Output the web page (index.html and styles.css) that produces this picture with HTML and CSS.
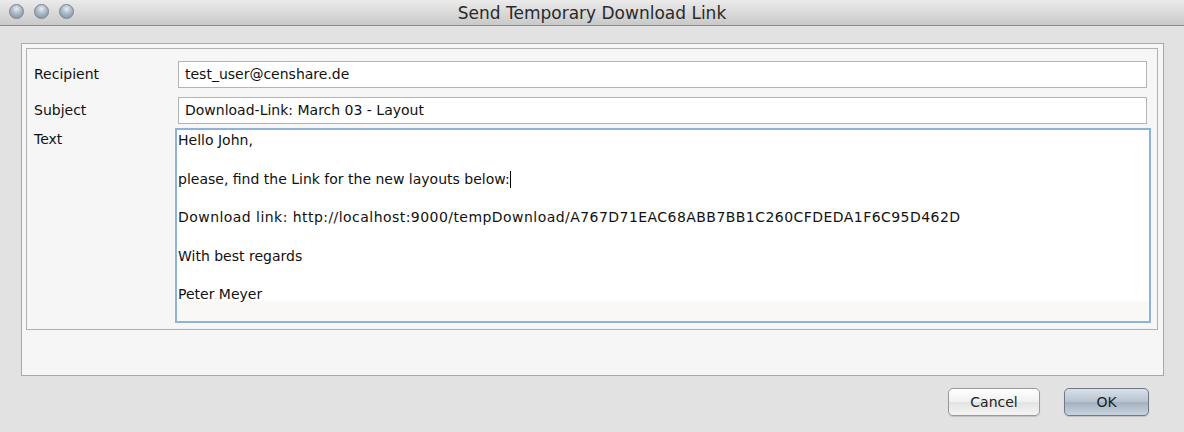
FILE: index.html
```html
<!DOCTYPE html>
<html lang="en">
<head>
  <meta charset="UTF-8" />
  <title>Send Temporary Download Link</title>
  <link rel="stylesheet" href="styles.css">
</head>
<body>
  <div class="titlebar">
    <div class="lights">
      <span class="light"></span>
      <span class="light"></span>
      <span class="light"></span>
    </div>
    <div class="title">Send Temporary Download Link</div>
  </div>

  <div class="dialog">
    <div class="outer">
      <div class="inner">
        <div class="label">Recipient</div>
        <div class="field">test_user@censhare.de</div>

        <div class="label">Subject</div>
        <div class="field">Download-Link: March 03 - Layout</div>

        <div class="label label-text">Text</div>
        <div class="textarea">
          <p>Hello John,</p>
          <p>please, find the Link for the new layouts below:<span class="caret"></span></p>
          <p class="link">Download link: http://localhost:9000/tempDownload/A767D71EAC68ABB7BB1C260CFDEDA1F6C95D462D</p>
          <p>With best regards</p>
          <p>Peter Meyer</p>
        </div>
      </div>
    </div>

    <div class="buttons">
      <button class="btn">Cancel</button>
      <button class="btn btn-default">OK</button>
    </div>
  </div>
</body>
</html>
```

FILE: styles.css
```css
body {
  margin: 0;
  width: 1184px;
  height: 432px;
  overflow: hidden;
  background: #e2e2e2;
  font-family: 'DejaVu Sans', sans-serif;
  font-size: 14px;
  color: #111;
}

.titlebar {
  position: relative;
  height: 25px;
  background: linear-gradient(#ebebeb, #c9c9c9);
  border-bottom: 1px solid #8c8c8c;
  display: flex;
  align-items: center;
  justify-content: center;
}

.lights {
  position: absolute;
  left: 9px;
  top: 4px;
  display: flex;
  gap: 10px;
}

.light {
  width: 15px;
  height: 15px;
  border-radius: 50%;
  box-sizing: border-box;
  border: 1px solid #7b8591;
  background: radial-gradient(circle at 50% 30%, #e6eef6 0, #aab7c5 45%, #7d8b9a 100%);
}

.title {
  font-size: 17px;
  color: #2a2a2a;
  padding-top: 1px;
}

.dialog {
  padding: 17px 20px 0 21px;
}

.outer {
  border: 1px solid #a9a9a9;
  background: #f6f6f6;
  padding: 4px 5px 45px 4px;
}

.inner {
  border: 1px solid #b0b0b0;
  background: #f6f6f6;
  display: grid;
  grid-template-columns: 144px 1fr;
  row-gap: 9px;
  padding: 12px 10px 6px 7px;
}

.label {
  line-height: 27px;
}

.label-text {
  line-height: 12px;
}

.field {
  height: 25px;
  line-height: 25px;
  border: 1px solid #b4b4b4;
  background: #fff;
  padding-left: 6px;
}

.textarea {
  margin: -5px -4px 0 -3px;
  height: 191px;
  border: 2px solid #8fb3d8;
  background: linear-gradient(#fff 170px, #f9f8f6 172px);
  padding: 0 0 0 1px;
}

.textarea p {
  margin: 0;
  height: 38.5px;
  line-height: 21px;
}

.textarea .link {
  letter-spacing: 0.45px;
}

.caret {
  display: inline-block;
  width: 1px;
  height: 17px;
  background: #000;
  vertical-align: -4px;
}

.buttons {
  display: flex;
  justify-content: flex-end;
  gap: 24px;
  padding: 12px 15px 0 0;
}

.btn {
  font-family: 'DejaVu Sans', sans-serif;
  font-size: 14px;
  width: 92px;
  height: 28px;
  border: 1px solid #9a9a9a;
  border-radius: 5px;
  background: linear-gradient(#ffffff, #f0f0f0 50%, #e3e3e3 51%, #f4f4f4);
  color: #222;
  box-shadow: 0 1px 1px rgba(0, 0, 0, 0.15);
}

.btn-default {
  width: 85px;
  border-color: #6e7985;
  background: linear-gradient(#d9e1ea, #b6c2cf 50%, #a3b1c0 51%, #c8d3de);
}
```
